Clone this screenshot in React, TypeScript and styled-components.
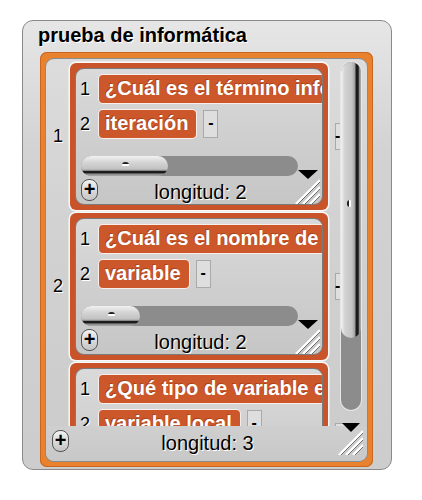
import React from "react"
import styled, { createGlobalStyle } from "styled-components"

const sans = `"Liberation Sans", Arial, Helvetica, sans-serif`

const GlobalStyle = createGlobalStyle`
  body {
    margin: 0;
    background: #fff;
    font-family: ${sans};
  }
`

// question / answer pairs, thumb = visible share of the horizontal scroller
const quiz = [
  { items: ["¿Cuál es el término informático para repetir?", "iteración"], thumb: 87 },
  { items: ["¿Cuál es el nombre de un espacio en memoria?", "variable"], thumb: 59 },
  { items: ["¿Qué tipo de variable existe sólo en un bloque?", "variable local"], thumb: 70 },
]

export default function App() {
  return (
    <>
      <GlobalStyle />
      <Watcher>
        <Title>prueba de informática</Title>
        <ListFrame>
          <Panel>
            <Viewport>
              {quiz.map((q, i) => (
                <OuterRow key={i}>
                  <OuterIndex>{i + 1}</OuterIndex>
                  <SubList items={q.items} thumb={q.thumb} />
                  <DeleteButton outer>-</DeleteButton>
                </OuterRow>
              ))}
            </Viewport>
            <VScroll>
              <VThumb>
                <VDot />
              </VThumb>
            </VScroll>
            <VArrow />
            <BottomBar>
              <PlusButton>+</PlusButton>
              <Length>longitud: {quiz.length}</Length>
              <ResizeHandle />
            </BottomBar>
          </Panel>
        </ListFrame>
      </Watcher>
    </>
  )
}

const SubList: React.FC<{ items: string[]; thumb: number }> = ({ items, thumb }) => (
  <Cell>
    <CellPanel>
      <Items>
        {items.map((text, i) => (
          <ItemRow key={i}>
            <ItemIndex>{i + 1}</ItemIndex>
            <Block>{text}</Block>
            {i > 0 && <DeleteButton>-</DeleteButton>}
          </ItemRow>
        ))}
      </Items>
      <HScroll>
        <HTrack>
          <HThumb style={{ width: thumb }}>
            <HDot />
          </HThumb>
        </HTrack>
        <Arrow />
      </HScroll>
      <Footer>
        <PlusButton>+</PlusButton>
        <Length>longitud: {items.length}</Length>
        <ResizeHandle />
      </Footer>
    </CellPanel>
  </Cell>
)

const ResizeHandle = () => (
  <Handle width="27" height="26" viewBox="0 0 27 26">
    <path d="M3 26 L27 2" stroke="#fff" strokeWidth="2.4" />
    <path d="M5 26 L27 4" stroke="#6f6f6f" strokeWidth="1" />
    <path d="M10 26 L27 9" stroke="#fff" strokeWidth="2.4" />
    <path d="M12 26 L27 11" stroke="#6f6f6f" strokeWidth="1" />
    <path d="M17 26 L27 16" stroke="#fff" strokeWidth="2.4" />
    <path d="M19 26 L27 18" stroke="#6f6f6f" strokeWidth="1" />
  </Handle>
)

const Watcher = styled.div`
  box-sizing: border-box;
  width: 370px;
  height: 450px;
  margin: 20px 0 0 22px;
  padding: 0 18px 2px 17px;
  border: 1px solid #8a8a8a;
  border-radius: 11px;
  background: linear-gradient(#e6e6e6, #d2d2d2 30%, #cdcdcd);
  display: flex;
  flex-direction: column;
`

const Title = styled.div`
  height: 31px;
  line-height: 29px;
  margin-left: -2px;
  font-size: 20px;
  font-weight: bold;
  color: #000;
  text-shadow: 1px 1px 0 #fff;
  white-space: nowrap;
`

const ListFrame = styled.div`
  flex: 1;
  min-height: 0;
  display: flex;
  padding: 6px 5px 5px;
  border-radius: 7px;
  background: #e8822f;
  box-shadow: inset 0 0 0 1px #c9661f;
`

const Panel = styled.div`
  flex: 1;
  position: relative;
  display: flex;
  flex-direction: column;
  overflow: hidden;
  border: 1px solid #8a8a8a;
  border-radius: 9px;
  background: linear-gradient(#dcdcdc, #d2d2d2 40%, #cbcbcb);
`

const Viewport = styled.div`
  flex: 1;
  min-height: 0;
  overflow: hidden;
  padding-top: 4px;
`

const OuterRow = styled.div`
  display: flex;
  align-items: center;
  height: 147px;
  margin-bottom: 3px;
`

const OuterIndex = styled.div`
  box-sizing: border-box;
  width: 24px;
  padding-left: 7px;
  font-size: 18px;
  color: #000;
  text-shadow: 1px 1px 0 #fff;
`

const Cell = styled.div`
  box-sizing: border-box;
  width: 258px;
  height: 147px;
  flex-shrink: 0;
  padding: 5px;
  border-radius: 6px;
  background: #c9542a;
  box-shadow: 0 0 0 1.5px rgba(255, 255, 255, 0.85);
  display: flex;
`

const CellPanel = styled.div`
  flex: 1;
  display: flex;
  flex-direction: column;
  overflow: hidden;
  border: 1px solid #7a7a7a;
  border-radius: 9px;
  background: linear-gradient(#dadada, #cfcfcf 50%, #c6c6c6);
`

const Items = styled.div`
  height: 82px;
  padding: 5px 2px 0 0;
  display: flex;
  flex-direction: column;
  gap: 5px;
  overflow: hidden;
`

const ItemRow = styled.div`
  display: flex;
  align-items: center;
  height: 30px;
`

const ItemIndex = styled.div`
  box-sizing: border-box;
  width: 22px;
  flex-shrink: 0;
  padding-left: 4px;
  font-size: 18px;
  color: #000;
  text-shadow: 1px 1px 0 #fff;
`

const Block = styled.div`
  box-sizing: border-box;
  height: 30px;
  flex-shrink: 0;
  padding: 0 8px 0 6px;
  border: 1.5px solid rgba(255, 255, 255, 0.9);
  border-radius: 5px;
  background: #cc572b;
  color: #fff;
  font-size: 20px;
  font-weight: bold;
  line-height: 27px;
  white-space: nowrap;
  text-shadow: -1px -1px 0 rgba(90, 30, 0, 0.35);
`

const DeleteButton = styled.div<{ outer?: boolean }>`
  box-sizing: border-box;
  width: 15px;
  height: ${p => (p.outer ? 27 : 28)}px;
  margin-left: ${p => (p.outer ? 7 : 6)}px;
  text-indent: ${p => (p.outer ? -1 : 0)}px;
  flex-shrink: 0;
  border: 1px solid #a9a9a9;
  background: #dedede;
  color: #000;
  font-size: 16px;
  font-weight: bold;
  line-height: 24px;
  text-align: ${p => (p.outer ? "left" : "center")};
`

const HScroll = styled.div`
  display: flex;
  height: 20px;
  margin-top: 2px;
  padding-left: 5px;
`

const HTrack = styled.div`
  width: 217px;
  height: 20px;
  border-radius: 10px;
  background: #8c8c8c;
  display: flex;
`

const HThumb = styled.div`
  position: relative;
  height: 20px;
  border-radius: 10px;
  background: linear-gradient(
    #f2f2f2 0%,
    #d6d6d6 30%,
    #c2c2c2 65%,
    #9a9a9a 72%,
    #1c1c1c 76%,
    #1c1c1c 84%,
    #8a8a8a 90%,
    #a8a8a8 100%
  );
`

const HDot = styled.div`
  position: absolute;
  left: 50%;
  top: 6px;
  width: 7px;
  height: 4px;
  margin-left: -3px;
  border-radius: 4px 4px 1px 1px;
  background: linear-gradient(#222 50%, #fff 50%);
`

const Arrow = styled.div`
  width: 0;
  height: 0;
  margin-top: 14px;
  border-left: 10px solid transparent;
  border-right: 10px solid transparent;
  border-top: 9px solid #000;
`

const Footer = styled.div`
  flex: 1;
  display: grid;
  grid-template-columns: 1fr auto 1fr;
  align-items: start;
  padding: 3px 2px 0 5px;
`

const PlusButton = styled.div`
  justify-self: start;
  box-sizing: border-box;
  width: 17px;
  height: 22px;
  border: 1.5px solid #555;
  border-radius: 8px;
  background: linear-gradient(#f2f2f2, #c4c4c4);
  color: #000;
  font-size: 20px;
  font-weight: bold;
  line-height: 19px;
  text-align: center;
`

const Length = styled.div`
  font-size: 20px;
  line-height: 22px;
  margin-top: 2px;
  color: #000;
  white-space: nowrap;
  text-shadow: 1px 1px 0 #fff;
`

const Handle = styled.svg`
  justify-self: end;
  display: block;
  margin-top: -1px;
`

const VScroll = styled.div`
  position: absolute;
  top: 3px;
  left: 295px;
  width: 20px;
  height: 348px;
  border-radius: 10px;
  background: #8c8c8c;
  box-shadow: 0 0 0 1px #e6e6e6;
`

const VThumb = styled.div`
  position: relative;
  height: 276px;
  border-radius: 10px;
  background: linear-gradient(
    to right,
    #f2f2f2 0%,
    #d2d2d2 20%,
    #c4c4c4 55%,
    #9c9c9c 70%,
    #1a1a1a 75%,
    #1a1a1a 86%,
    #8a8a8a 92%,
    #b4b4b4 100%
  );
`

const VDot = styled.div`
  position: absolute;
  top: 138px;
  left: 6px;
  width: 4px;
  height: 7px;
  border-radius: 4px 1px 1px 4px;
  background: linear-gradient(to right, #222 50%, #fff 50%);
`

const VArrow = styled.div`
  position: absolute;
  top: 364px;
  left: 296px;
  width: 0;
  height: 0;
  border-left: 9px solid transparent;
  border-right: 9px solid transparent;
  border-top: 9px solid #000;
  z-index: 2;
`

const BottomBar = styled.div`
  height: 31px;
  display: grid;
  grid-template-columns: 1fr auto 1fr;
  align-items: start;
  padding: 4px 4px 0 6px;
  background: linear-gradient(#cfcfcf, #c8c8c8);
  border-radius: 0 0 8px 8px;
`
